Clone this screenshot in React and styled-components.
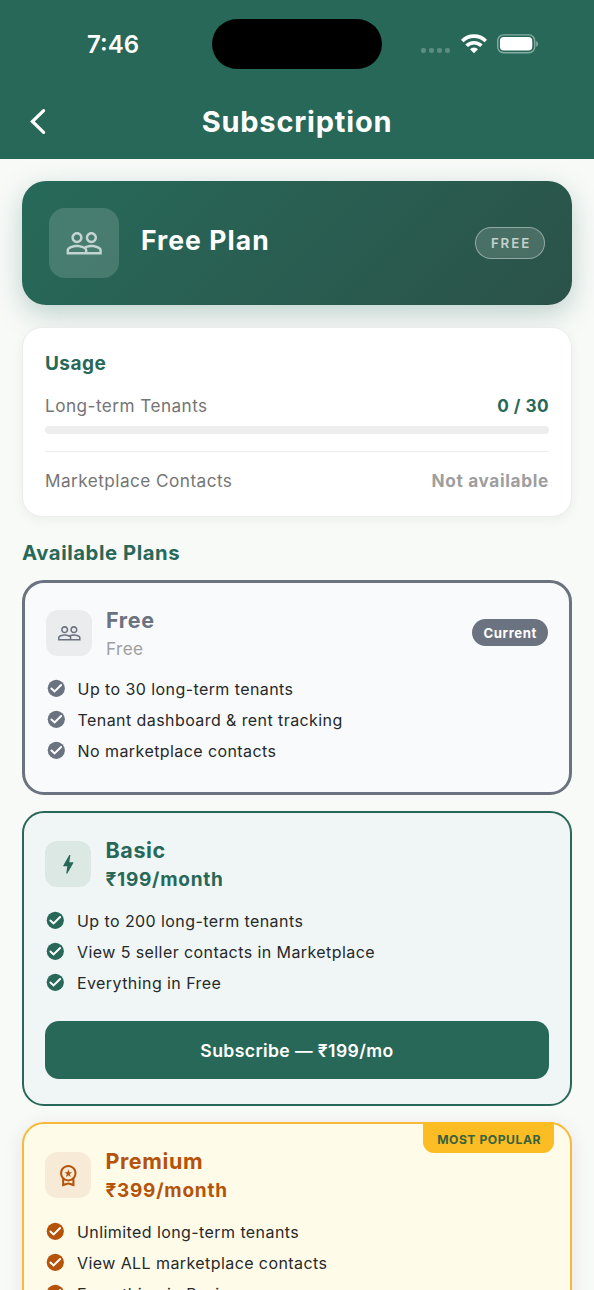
import React from 'react'
import styled, { createGlobalStyle } from 'styled-components'
import { MdBolt, MdOutlineWorkspacePremium } from 'react-icons/md'


const GlobalStyle = createGlobalStyle`
    * {
        box-sizing: border-box;
    }

    body {
        margin: 0;
        background: #f8faf8;
        font-family: Inter, "Liberation Sans", sans-serif;
        -webkit-font-smoothing: antialiased;
    }
`;

const Screen = styled.div`
    width: 100%;
    height: 1290px;
    overflow: hidden;
    background: #f8faf8;
`;

const Header = styled.header`
    height: 159px;
    background: #286858;
    color: #fff;
`;

const StatusBar = styled.div`
    height: 87px;
    display: grid;
    grid-template-columns: 212px 170px 1fr;
    align-items: center;
`;

const Time = styled.span`
    padding: 2px 0 0 87px;
    font-size: 24px;
    font-weight: 600;
    line-height: 28px;
`;

const Island = styled.div`
    height: 50px;
    border-radius: 25px;
    background: #000;
`;

const StatusIcons = styled.div`
    display: flex;
    align-items: center;
    padding-left: 39px;
`;

const SignalDots = styled.div`
    display: flex;
    gap: 3px;
    margin: 13px 11px 0 0;

    i {
        width: 5px;
        height: 5px;
        border-radius: 2px;
        background: #5b8d80;
    }
`;

const WifiSvg = styled.svg`
    width: 26px;
    height: 20px;
    margin-right: 10px;
`;

const BatterySvg = styled.svg`
    width: 42px;
    height: 20px;
`;

const NavBar = styled.div`
    height: 70px;
    display: grid;
    grid-template-columns: 60px 1fr 60px;
    align-items: center;
`;

const BackButton = styled.button`
    display: flex;
    padding: 0 0 0 29px;
    border: none;
    background: none;
    color: #fff;
`;

const NavTitle = styled.h1`
    margin: 0;
    text-align: center;
    font-size: 29px;
    font-weight: 700;
    line-height: 36px;
    letter-spacing: 0.8px;
`;

const Content = styled.main`
    padding: 22px 22px 0;
`;

const PlanBanner = styled.section`
    height: 124px;
    display: flex;
    align-items: center;
    padding: 0 27px;
    border-radius: 24px;
    background: linear-gradient(135deg, #276a5a, #2b5248);
    box-shadow: 0 9px 28px rgba(40, 104, 88, 0.28);
    color: #fff;
`;

const BannerIcon = styled.div`
    width: 70px;
    height: 70px;
    display: flex;
    align-items: center;
    justify-content: center;
    border-radius: 16px;
    background: rgba(255, 255, 255, 0.15);
    color: #c3d5d0;
`;

const BannerTitle = styled.h2`
    flex: 1;
    margin: 0 0 7px 22px;
    font-size: 26.5px;
    font-weight: 700;
    line-height: 32px;
    letter-spacing: 1.05px;
`;

const BannerTag = styled.span`
    width: 70px;
    height: 32px;
    display: flex;
    align-items: center;
    justify-content: center;
    padding-left: 2px;
    border: 1.5px solid rgba(255, 255, 255, 0.4);
    border-radius: 16px;
    background: rgba(255, 255, 255, 0.15);
    color: #c3d1cd;
    font-size: 13.3px;
    font-weight: 600;
    letter-spacing: 1.9px;
`;

const UsageCard = styled.section`
    height: 190px;
    margin-top: 22px;
    padding: 24px 22px 0;
    border: 1px solid #ebeceb;
    border-radius: 20px;
    background: #fff;
    box-shadow: 0 3px 12px rgba(0, 0, 0, 0.05);
`;

const UsageTitle = styled.h3`
    margin: 0;
    color: #286858;
    font-size: 19px;
    font-weight: 700;
    line-height: 24px;
    letter-spacing: 0.45px;
`;

const UsageRow = styled.div`
    display: flex;
    justify-content: space-between;
    align-items: center;
    height: 24px;
    margin-top: ${props => props.$top}px;
    color: #757575;
    font-size: 17.2px;
    letter-spacing: 0.45px;
`;

const UsageValue = styled.span`
    color: ${props => props.$muted ? '#9e9e9e' : '#286858'};
    font-weight: 700;
    letter-spacing: ${props => props.$muted ? 0.67 : 0.45}px;
`;

const Track = styled.div`
    height: 8px;
    margin-top: 9px;
    border-radius: 4px;
    background: #ededed;
`;

const Divider = styled.div`
    height: 1px;
    margin-top: 17px;
    background: #ececec;
`;

const SectionTitle = styled.h2`
    margin: 23px 0 14px;
    color: #286858;
    font-size: 20.3px;
    font-weight: 700;
    line-height: 26px;
    letter-spacing: 0.55px;
`;

const PlanCard = styled.article`
    position: relative;
    height: ${props => props.$height}px;
    margin-bottom: 16px;
    padding: ${props => props.$pad};
    border: ${props => props.$border}px solid ${props => props.$line};
    border-radius: 22px;
    background: ${props => props.$bg};
    box-shadow: ${props => props.$shadow || 'none'};
`;

const PlanHead = styled.div`
    display: flex;
    align-items: center;
    height: 60px;
`;

const PlanIcon = styled.div`
    width: 46px;
    height: 46px;
    display: flex;
    align-items: center;
    justify-content: center;
    border-radius: 12px;
    background: ${props => props.$bg};
    color: ${props => props.$color};
`;

const PlanNames = styled.div`
    flex: 1;
    margin-left: 14px;
    padding-top: 2px;
`;

const PlanName = styled.h3`
    margin: 0;
    color: ${props => props.$color};
    font-size: 21.5px;
    font-weight: 700;
    line-height: ${props => props.$free ? 28 : 29}px;
    letter-spacing: 0.65px;
`;

const Price = styled.p`
    margin: 0;
    color: ${props => props.$color};
    font-size: ${props => props.$free ? 17.2 : 19}px;
    font-weight: ${props => props.$free ? 400 : 700};
    line-height: 29px;
    letter-spacing: ${props => props.$free ? 0.4 : 0.75}px;
`;

const CurrentTag = styled.span`
    height: 27px;
    margin-bottom: 2px;
    padding: 0 11px;
    border-radius: 14px;
    background: #6b7280;
    color: #fff;
    font-size: 13.2px;
    font-weight: 700;
    line-height: 28px;
    letter-spacing: 0.6px;
`;

const PopularTag = styled.span`
    position: absolute;
    top: -2px;
    right: 16px;
    height: 31px;
    padding: 0 13px 0 14px;
    border-radius: 0 0 11px 11px;
    background: #fbbc24;
    color: #3a633c;
    font-size: 12.2px;
    font-weight: 700;
    line-height: 35px;
    letter-spacing: 0.5px;
`;

const Features = styled.ul`
    margin: ${props => props.$top}px 0 0;
    padding: 0;
    list-style: none;
`;

const Feature = styled.li`
    display: flex;
    align-items: center;
    gap: 11px;
    height: 31px;
    color: #262929;
    font-size: 16px;
    letter-spacing: 0.42px;

    svg {
        color: ${props => props.$color};
    }
`;

const SubscribeButton = styled.button`
    display: block;
    width: 100%;
    height: 58px;
    margin-top: 23px;
    border: none;
    border-radius: 14px;
    background: #286858;
    color: #fff;
    font-family: inherit;
    font-size: 17.6px;
    font-weight: 600;
    letter-spacing: 0.4px;
`;


const PeopleIcon = ({ size }) => (
    <svg width={size} height={size} viewBox="0 0 24 24" fill="currentColor">
        <path d="M16.5 13c-1.2 0-3.07.34-4.5 1-1.43-.67-3.3-1-4.5-1C5.33 13 1 14.08 1 16.25V19h22v-2.75c0-2.17-4.33-3.25-6.5-3.25zm-4 4.5h-10v-1.25c0-.54 2.56-1.75 5-1.75s5 1.21 5 1.75v1.25zm9 0H14v-1.25c0-.46-.2-.86-.52-1.22.88-.3 1.96-.53 3.02-.53 2.44 0 5 1.21 5 1.75v1.25zM7.5 12c1.93 0 3.5-1.57 3.5-3.5S9.43 5 7.5 5 4 6.57 4 8.5 5.57 12 7.5 12zm0-5.5c1.1 0 2 .9 2 2s-.9 2-2 2-2-.9-2-2 .9-2 2-2zm9 5.5c1.93 0 3.5-1.57 3.5-3.5S18.43 5 16.5 5 13 6.57 13 8.5s1.57 3.5 3.5 3.5zm0-5.5c1.1 0 2 .9 2 2s-.9 2-2 2-2-.9-2-2 .9-2 2-2z" />
    </svg>
);

const CheckIcon = () => (
    <svg width="20.6" height="20.6" viewBox="0 0 24 24" fill="none">
        <circle cx="12" cy="12" r="10" fill="currentColor" />
        <path d="M6.3 12.2L10 15.7L17.6 8.2" stroke="#fff" strokeWidth="2.3" strokeLinecap="round" />
    </svg>
);

const Wifi = () => (
    <WifiSvg viewBox="0 0 26 20" fill="none" stroke="#fff" strokeWidth="3.6">
        <path d="M1.2 7a16.8 16.8 0 0 1 23.6 0" />
        <path d="M5.6 11.7a10.6 10.6 0 0 1 14.8 0" />
        <path d="M13 19.2l-4-4a5.7 5.7 0 0 1 8 0z" fill="#fff" stroke="none" />
    </WifiSvg>
);

const Battery = () => (
    <BatterySvg viewBox="0 0 42 20">
        <rect x="0.7" y="0.9" width="37" height="17.8" rx="5.8" fill="none" stroke="#86aca2" strokeWidth="1.4" />
        <rect x="2.9" y="3.1" width="32.4" height="13.4" rx="4" fill="#fff" />
        <path d="M39.2 6.9c2.4.9 2.4 4.9 0 5.8z" fill="#86aca2" />
    </BatterySvg>
);

const plans = [
    {
        name: 'Free',
        price: 'Free',
        color: '#6b7280',
        priceColor: '#9e9e9e',
        line: '#6b7280',
        bg: '#f9fafc',
        iconBg: '#ebecee',
        icon: <PeopleIcon size={24.6} />,
        border: 3,
        height: 215,
        pad: '20px 21px 0',
        featuresTop: 10,
        current: true,
        features: ['Up to 30 long-term tenants', 'Tenant dashboard & rent tracking', 'No marketplace contacts'],
    },
    {
        name: 'Basic',
        price: '₹199/month',
        color: '#286858',
        priceColor: '#286858',
        line: '#286858',
        bg: '#f0f6f5',
        iconBg: '#dce8e4',
        icon: <MdBolt size={24.6} />,
        border: 2,
        height: 295,
        pad: '21px 21.4px 0',
        featuresTop: 11,
        cta: 'Subscribe — ₹199/mo',
        features: ['Up to 200 long-term tenants', 'View 5 seller contacts in Marketplace', 'Everything in Free'],
    },
    {
        name: 'Premium',
        price: '₹399/month',
        color: '#b45309',
        priceColor: '#b45309',
        line: '#f6b93a',
        bg: '#fffbe9',
        iconBg: '#f7ead7',
        icon: <MdOutlineWorkspacePremium size={24.6} />,
        border: 2,
        height: 295,
        pad: '21px 21.4px 0',
        featuresTop: 11,
        popular: true,
        shadow: '0 4px 20px rgba(60, 20, 20, 0.09)',
        cta: 'Subscribe — ₹399/mo',
        features: ['Unlimited long-term tenants', 'View ALL marketplace contacts', 'Everything in Basic'],
    },
];

const Plan = ({ plan }) => {
    return (
        <PlanCard
            $height={plan.height}
            $pad={plan.pad}
            $border={plan.border}
            $line={plan.line}
            $bg={plan.bg}
            $shadow={plan.shadow}
        >
            {plan.popular && <PopularTag>MOST POPULAR</PopularTag>}
            <PlanHead>
                <PlanIcon $bg={plan.iconBg} $color={plan.color}>{plan.icon}</PlanIcon>
                <PlanNames>
                    <PlanName $color={plan.color} $free={plan.current}>{plan.name}</PlanName>
                    <Price $color={plan.priceColor} $free={plan.current}>{plan.price}</Price>
                </PlanNames>
                {plan.current && <CurrentTag>Current</CurrentTag>}
            </PlanHead>
            <Features $top={plan.featuresTop}>
                {plan.features.map(text => (
                    <Feature key={text} $color={plan.color}>
                        <CheckIcon />
                        {text}
                    </Feature>
                ))}
            </Features>
            {plan.cta && <SubscribeButton>{plan.cta}</SubscribeButton>}
        </PlanCard>
    );
}

export const Subscription = () => {
    return (
        <Screen>
            <GlobalStyle />
            <Header>
                <StatusBar>
                    <Time>7:46</Time>
                    <Island />
                    <StatusIcons>
                        <SignalDots><i /><i /><i /><i /></SignalDots>
                        <Wifi />
                        <Battery />
                    </StatusIcons>
                </StatusBar>
                <NavBar>
                    <BackButton aria-label="Back">
                        <svg width="18" height="28" viewBox="0 0 18 28" fill="none" stroke="currentColor" strokeWidth="3.2" strokeLinecap="round">
                            <path d="M14.6 2.6L3.4 13.5L14.6 24.4" />
                        </svg>
                    </BackButton>
                    <NavTitle>Subscription</NavTitle>
                </NavBar>
            </Header>
            <Content>
                <PlanBanner>
                    <BannerIcon><PeopleIcon size={38.4} /></BannerIcon>
                    <BannerTitle>Free Plan</BannerTitle>
                    <BannerTag>FREE</BannerTag>
                </PlanBanner>
                <UsageCard>
                    <UsageTitle>Usage</UsageTitle>
                    <UsageRow $top={17}>
                        <span>Long-term Tenants</span>
                        <UsageValue>0 / 30</UsageValue>
                    </UsageRow>
                    <Track />
                    <Divider />
                    <UsageRow $top={16}>
                        <span>Marketplace Contacts</span>
                        <UsageValue $muted>Not available</UsageValue>
                    </UsageRow>
                </UsageCard>
                <SectionTitle>Available Plans</SectionTitle>
                {plans.map(plan => <Plan key={plan.name} plan={plan} />)}
            </Content>
        </Screen>
    );
}


export default Subscription;
